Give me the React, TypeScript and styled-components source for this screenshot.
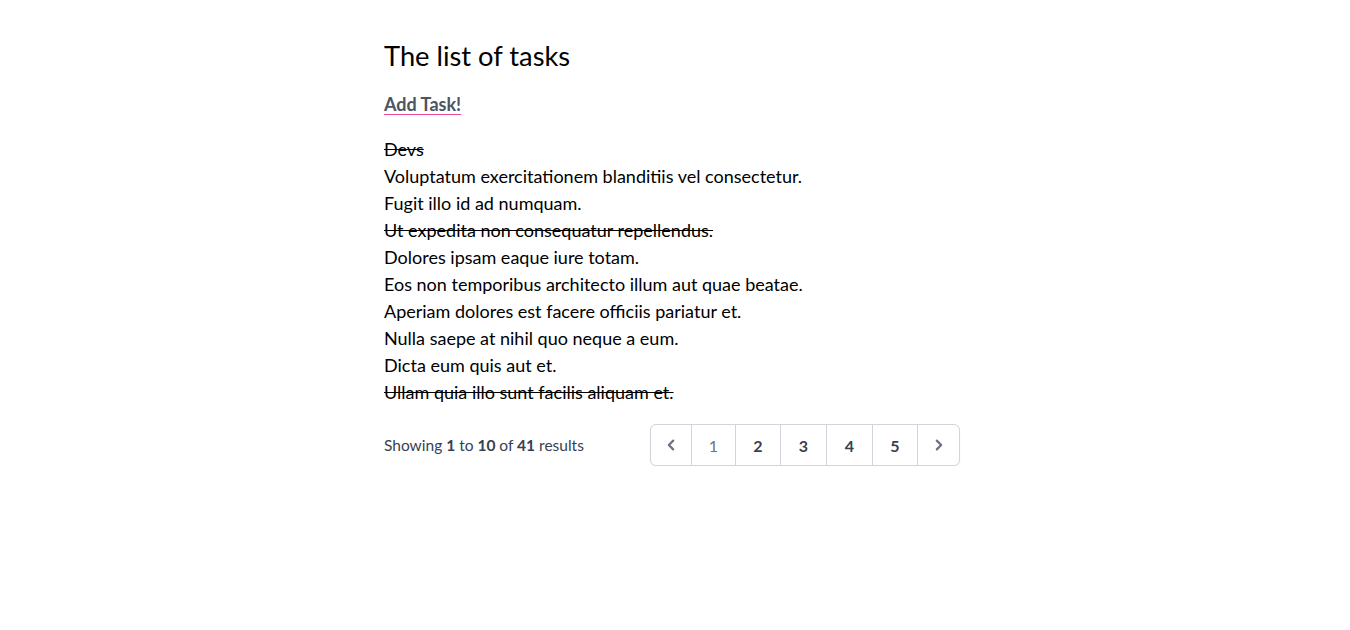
import React from 'react';
import styled, { createGlobalStyle } from 'styled-components';

const GlobalStyle = createGlobalStyle`
  html, body {
    margin: 0;
    padding: 0;
    background: #ffffff;
  }
  body {
    font-family: Lato, "Noto Sans", sans-serif;
    color: #000000;
  }
`;

const Page = styled.div`
  padding: 0 6px 0 0;
`;

const Container = styled.main`
  width: 576px;
  margin: 0 auto;
  padding-top: 38px;
`;

const Title = styled.h1`
  font-size: 27.3px;
  font-weight: 400;
  line-height: 36px;
  margin: 0 0 18px;
`;

const AddLink = styled.a`
  display: inline-block;
  font-size: 18px;
  font-weight: 700;
  line-height: 24px;
  color: #4b5563;
  text-decoration: underline;
  text-decoration-color: #ec4899;
  text-underline-offset: 3px;
  margin-bottom: 20px;
`;

const TaskList = styled.ul`
  list-style: none;
  margin: 0 0 18px;
  padding: 0;
`;

const TaskItem = styled.li<{ $done?: boolean }>`
  font-size: 18px;
  line-height: 27px;
  text-decoration: ${(p) => (p.$done ? 'line-through' : 'none')};
`;

const Footer = styled.nav`
  display: flex;
  align-items: center;
  justify-content: space-between;
`;

const Summary = styled.p`
  margin: 0;
  font-size: 15.5px;
  color: #374151;
  b {
    font-weight: 700;
  }
`;

const Pager = styled.div`
  display: flex;
  border: 1px solid #d1d5db;
  border-radius: 6px;
  box-shadow: 0 1px 2px rgba(0, 0, 0, 0.05);
  background: #fff;
  overflow: hidden;
`;

const PageButton = styled.span<{ $w: number; $current?: boolean }>`
  display: flex;
  align-items: center;
  justify-content: center;
  width: ${(p) => p.$w}px;
  height: 40px;
  font-size: 16px;
  font-weight: ${(p) => (p.$current ? 400 : 700)};
  color: ${(p) => (p.$current ? '#6b7280' : '#374151')};
  & + & {
    border-left: 1px solid #d1d5db;
  }
`;

const Chevron = ({ dir }: { dir: 'left' | 'right' }) => (
  <svg width="22" height="22" viewBox="0 0 20 20" fill="#6b7280">
    {dir === 'left' ? (
      <path
        fillRule="evenodd"
        d="M12.707 5.293a1 1 0 010 1.414L9.414 10l3.293 3.293a1 1 0 01-1.414 1.414l-4-4a1 1 0 010-1.414l4-4a1 1 0 011.414 0z"
        clipRule="evenodd"
      />
    ) : (
      <path
        fillRule="evenodd"
        d="M7.293 14.707a1 1 0 010-1.414L10.586 10 7.293 6.707a1 1 0 011.414-1.414l4 4a1 1 0 010 1.414l-4 4a1 1 0 01-1.414 0z"
        clipRule="evenodd"
      />
    )}
  </svg>
);

const tasks = [
  { title: 'Devs', done: true },
  { title: 'Voluptatum exercitationem blanditiis vel consectetur.', done: false },
  { title: 'Fugit illo id ad numquam.', done: false },
  { title: 'Ut expedita non consequatur repellendus.', done: true },
  { title: 'Dolores ipsam eaque iure totam.', done: false },
  { title: 'Eos non temporibus architecto illum aut quae beatae.', done: false },
  { title: 'Aperiam dolores est facere officiis pariatur et.', done: false },
  { title: 'Nulla saepe at nihil quo neque a eum.', done: false },
  { title: 'Dicta eum quis aut et.', done: false },
  { title: 'Ullam quia illo sunt facilis aliquam et.', done: true },
];

const pages = [
  { label: '1', w: 43, current: true },
  { label: '2', w: 44 },
  { label: '3', w: 45 },
  { label: '4', w: 45 },
  { label: '5', w: 44 },
];

export default function App() {
  return (
    <Page>
      <GlobalStyle />
      <Container>
        <Title>The list of tasks</Title>
        <AddLink href="#">Add Task!</AddLink>
        <TaskList>
          {tasks.map((t) => (
            <TaskItem key={t.title} $done={t.done}>
              {t.title}
            </TaskItem>
          ))}
        </TaskList>
        <Footer>
          <Summary>
            Showing <b>1</b> to <b>10</b> of <b>41</b> results
          </Summary>
          <Pager>
            <PageButton $w={40}>
              <Chevron dir="left" />
            </PageButton>
            {pages.map((p) => (
              <PageButton key={p.label} $w={p.w} $current={p.current}>
                {p.label}
              </PageButton>
            ))}
            <PageButton $w={41}>
              <Chevron dir="right" />
            </PageButton>
          </Pager>
        </Footer>
      </Container>
    </Page>
  );
}
